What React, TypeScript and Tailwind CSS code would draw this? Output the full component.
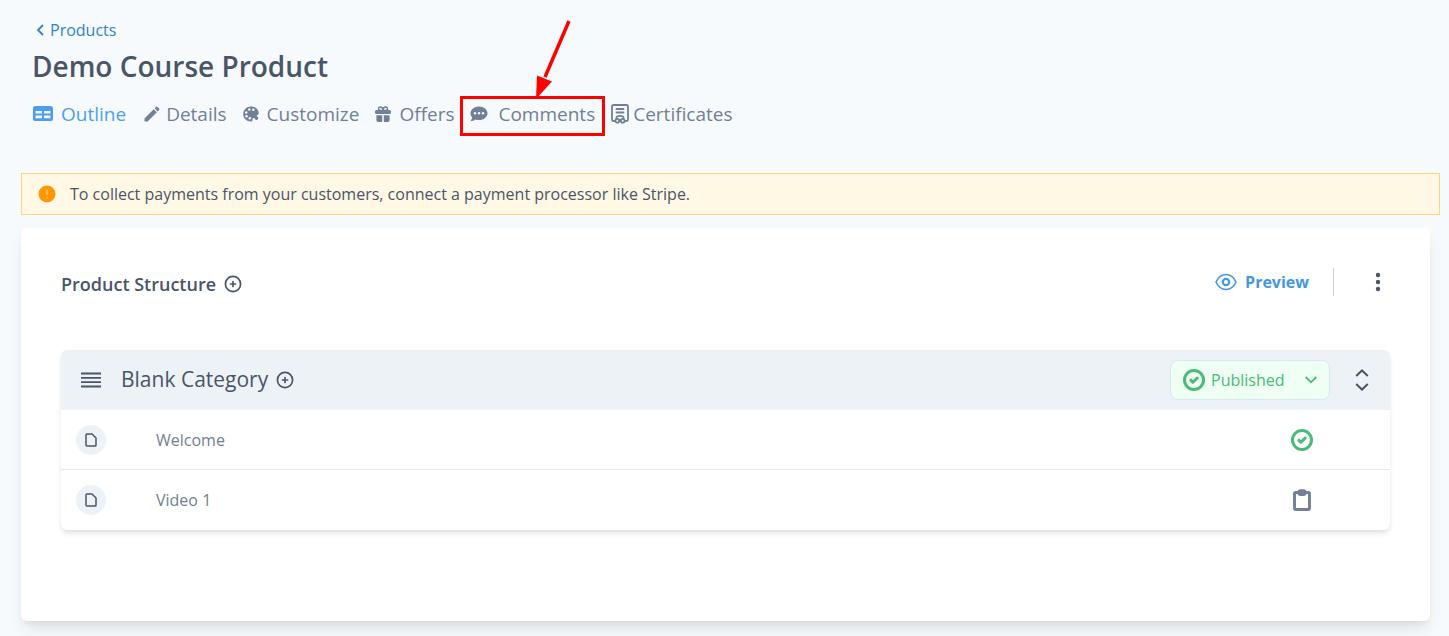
import { MdEdit } from "react-icons/md";

type IconProps = { className?: string };

function TableIcon({ className }: IconProps) {
    return (
        <svg className={className} viewBox="0 0 21 16" fill="none">
            <rect x="1" width="20" height="15" rx="2.6" fill="currentColor" />
            <path d="M3.600 5H10v2.600H3.600zM12 5h6.400v2.600H12zM3.600 9.600H10v2.600H3.600zM12 9.600h6.400v2.600H12z" fill="#f7fafc" />
        </svg>
    );
}

function PaletteIcon({ className }: IconProps) {
    return (
        <svg className={className} viewBox="0 0 16 16">
            <path d="M8 .5C3.600.5.200 3.800.200 8s3.400 7.500 7.800 7.500c1.300 0 1.700-.8 1.600-1.800-.1-1.200.5-1.800 1.500-1.500 1 .3 1.300 2 2.600 1.700 1.200-.3 1.900-1.500 1.500-2.500-.3-.8-1.600-.8-1.500-1.700.1-1 2.100-.7 2.100-2.500C15.800 3.500 12.500.5 8 .5Z" fill="currentColor" />
            <g fill="#f7fafc">
                <circle cx="6.300" cy="3.600" r="1.250" />
                <circle cx="10.300" cy="3.700" r="1.250" />
                <circle cx="3.200" cy="6.600" r="1.250" />
                <circle cx="3.500" cy="10.200" r="1.250" />
                <circle cx="6.800" cy="12.300" r="1.250" />
            </g>
        </svg>
    );
}

function GiftIcon({ className }: IconProps) {
    return (
        <svg className={className} viewBox="0 0 16 16" fill="currentColor">
            <path d="M1.400 9.300h5.800V16h-4a1.800 1.800 0 0 1-1.800-1.800ZM8.800 9.300h5.800v4.900a1.800 1.800 0 0 1-1.800 1.800h-4Z" />
            <path d="M1.500 4h13A1.500 1.500 0 0 1 16 5.500v1A1.500 1.500 0 0 1 14.500 8h-13A1.500 1.500 0 0 1 0 6.500v-1A1.500 1.500 0 0 1 1.500 4Z" />
            <path d="M8 4.400H5.200a1.700 1.700 0 1 1 0-3.400C6.900 1 8 2.700 8 4.400Zm0 0h2.800a1.700 1.700 0 1 0 0-3.400C9.100 1 8 2.700 8 4.400Z" fill="none" stroke="currentColor" strokeWidth="1.500" />
        </svg>
    );
}

function CommentIcon({ className }: IconProps) {
    return (
        <svg className={className} viewBox="0 0 18 16">
            <path d="M9 .5C4.300.5.500 3.500.500 7.300c0 1.600.7 3 1.700 4.200-.2 1.300-.8 2.400-1.700 3.500 1.900 0 3.500-.7 4.800-1.600 1.100.4 2.400.7 3.700.7 4.700 0 8.500-3 8.500-6.800S13.700.5 9 .5Z" fill="currentColor" />
            <g fill="#f7fafc">
                <circle cx="5" cy="7.300" r="1.200" />
                <circle cx="9" cy="7.300" r="1.200" />
                <circle cx="13" cy="7.300" r="1.200" />
            </g>
        </svg>
    );
}

function CertificateIcon({ className }: IconProps) {
    return (
        <svg className={className} viewBox="0 0 18 20" fill="none" stroke="currentColor" strokeWidth="1.8" strokeLinecap="round" strokeLinejoin="round">
            <path d="M3.500 17H2.500A1.500 1.500 0 0 1 1 15.500v-13A1.500 1.500 0 0 1 2.500 1h13A1.500 1.500 0 0 1 17 2.500v13a1.500 1.500 0 0 1-1.500 1.500h-1" />
            <path d="M5.500 5h7M5.500 8.500h7M5.500 14v-.500c0-2.200 7-2.200 7 0v.500" />
            <circle cx="6.300" cy="16.800" r="1.900" />
            <circle cx="11.700" cy="16.800" r="1.900" />
            <path d="M8.200 16h1.600" />
        </svg>
    );
}

function AddIcon({ className }: IconProps) {
    return (
        <svg className={className} viewBox="0 0 18 18" fill="none" stroke="currentColor" strokeWidth="1.7" strokeLinecap="round">
            <circle cx="9" cy="9" r="7.600" />
            <path d="M9 6.500v5M6.500 9h5" />
        </svg>
    );
}

function EyeIcon({ className }: IconProps) {
    return (
        <svg className={className} viewBox="0 0 22 18" fill="none" stroke="currentColor" strokeWidth="1.600">
            <path d="M1 9C3.300 4 6.800 1.500 11 1.500S18.700 4 21 9c-2.300 5-5.800 7.500-10 7.500S3.300 14 1 9Z" strokeLinejoin="round" />
            <circle cx="11" cy="9" r="3.200" strokeWidth="2.200" />
        </svg>
    );
}

function CheckIcon({ className }: IconProps) {
    return (
        <svg className={className} viewBox="0 0 22 22" fill="none" stroke="currentColor" strokeWidth="3" strokeLinecap="round" strokeLinejoin="round">
            <circle cx="11" cy="11" r="9.500" />
            <path d="m7.800 11.200 2.100 2.100L14.200 9" />
        </svg>
    );
}

function ClipboardIcon({ className }: IconProps) {
    return (
        <svg className={className} viewBox="0 0 18 22" fill="none" stroke="currentColor" strokeWidth="2.900" strokeLinejoin="round">
            <rect x="1.500" y="3.500" width="15" height="17" rx="1.300" />
            <rect x="5.900" y="1.600" width="6.200" height="4" rx="1.800" />
        </svg>
    );
}

function FileIcon({ className }: IconProps) {
    return (
        <svg className={className} viewBox="0 0 12 14" fill="none" stroke="currentColor" strokeWidth="1.500" strokeLinejoin="round">
            <path d="M2 1h5l4 4v7.200a.8.8 0 0 1-.8.8H2a1 1 0 0 1-1-1V2a1 1 0 0 1 1-1Z" />
        </svg>
    );
}

function Arrow() {
    return (
        <svg className="pointer-events-none absolute bottom-full left-15 h-20 w-12" viewBox="0 0 48 80">
            <path d="M46 2 22 58" stroke="#ff0000" strokeWidth="3.500" />
            <path d="M13 80 14 56.500 29 62.500Z" fill="#ff0000" />
        </svg>
    );
}

const lessons = [
    { title: "Welcome", published: true },
    { title: "Video 1", published: false }
];

export default function App() {
    return (
        <div className="min-h-screen bg-[#f7fafc] pb-3.5 font-['Open_Sans',sans-serif] text-[#4a5568]">
            <header className="px-8 pt-4">
                <a href="#products" className="flex items-center gap-1 pl-1 text-base leading-7 text-[#3182ce]">
                    <svg className="h-3 w-2.5" viewBox="0 0 10 12" fill="none" stroke="currentColor" strokeWidth="1.800">
                        <path d="M7 1 2 6l5 5" />
                    </svg>
                    Products
                </a>
                <h1 className="text-[28px] font-semibold leading-11">Demo Course Product</h1>
                <nav className="mt-1.5 flex h-10 items-center gap-4 text-[19px] text-[#718096]">
                    <a href="#outline" className="flex items-center gap-2 text-[#4c9ff0]">
                        <TableIcon className="h-4 w-[21px]" />
                        Outline
                    </a>
                    <a href="#details" className="flex items-center gap-1">
                        <MdEdit className="size-5" />
                        Details
                    </a>
                    <a href="#customize" className="flex items-center gap-2">
                        <PaletteIcon className="size-4" />
                        Customize
                    </a>
                    <a href="#offers" className="flex items-center gap-2">
                        <GiftIcon className="size-4" />
                        Offers
                    </a>
                    <a href="#comments" className="relative flex items-center gap-2.5">
                        <CommentIcon className="h-4 w-4.5" />
                        Comments
                        <span className="pointer-events-none absolute -inset-x-2.5 -bottom-2 -top-1 border-3 border-[#ff0000]">
                            <Arrow />
                        </span>
                    </a>
                    <a href="#certificates" className="flex items-center gap-1">
                        <CertificateIcon className="h-5 w-4.5" />
                        Certificates
                    </a>
                </nav>
            </header>

            <div className="ml-[21px] mr-[9px] mt-[39px] flex min-h-[42px] items-center gap-3.5 border border-[#fcd581] bg-[#fff8e5] px-4 text-base">
                <svg className="size-4.5 shrink-0" viewBox="0 0 18 18">
                    <circle cx="9" cy="9" r="8.500" fill="#ff9800" />
                    <path d="M9 4.500v5.500M9 12v1.500" stroke="#ffc46b" strokeWidth="1.500" />
                </svg>
                <p>To collect payments from your customers, connect a payment processor like Stripe.</p>
            </div>

            <main className="ml-[21px] mr-[19px] mt-[13px] rounded-md bg-white px-10 pb-[91px] pt-8 shadow-[0_10px_15px_-3px_rgba(0,0,0,0.1),0_4px_6px_-2px_rgba(0,0,0,0.05)]">
                <div className="flex h-11 items-center justify-between">
                    <div className="flex items-center gap-2 pt-1">
                        <h2 className="text-lg font-semibold">Product Structure</h2>
                        <button type="button" aria-label="Add to structure">
                            <AddIcon className="size-4.5" />
                        </button>
                    </div>
                    <div className="flex items-center">
                        <a href="#preview" className="flex items-center gap-2 text-base font-bold text-[#4299e1]">
                            <EyeIcon className="h-4.5 w-[22px]" />
                            Preview
                        </a>
                        <span className="ml-6 h-7 w-px bg-[#cbd5e0]" />
                        <button type="button" aria-label="More options" className="ml-8 flex size-6 items-center justify-center">
                            <svg className="h-5 w-1.5" viewBox="0 0 6 20" fill="currentColor">
                                <circle cx="3" cy="3" r="2.200" />
                                <circle cx="3" cy="10" r="2.200" />
                                <circle cx="3" cy="17" r="2.200" />
                            </svg>
                        </button>
                    </div>
                </div>

                <section className="mt-[46px] rounded-md shadow-[0_4px_6px_-1px_rgba(0,0,0,0.1),0_2px_4px_-1px_rgba(0,0,0,0.06)]">
                    <div className="flex h-15 items-center rounded-t-md bg-[#edf2f7] pl-5 pr-4">
                        <svg className="h-4 w-5" viewBox="0 0 20 16" stroke="currentColor" strokeWidth="1.800">
                            <path d="M0 1.500h20M0 5.800h20M0 10.200h20M0 14.500h20" />
                        </svg>
                        <h3 className="ml-5 text-[21px]">Blank Category</h3>
                        <button type="button" aria-label="Add to category" className="ml-2">
                            <AddIcon className="size-4.5" />
                        </button>
                        <button type="button" className="ml-auto flex h-10 w-40 items-center rounded-lg border border-[#d9e8ee] bg-[#f0fff4] px-3 text-base text-[#48bb78]">
                            <CheckIcon className="size-[22px]" />
                            <span className="ml-1.5">Published</span>
                            <svg className="ml-auto h-2 w-3" viewBox="0 0 12 8" fill="none" stroke="currentColor" strokeWidth="1.800">
                                <path d="m.7 1 5.300 5.300L11.300 1" />
                            </svg>
                        </button>
                        <button type="button" aria-label="Reorder" className="ml-5 flex w-6 justify-center">
                            <svg className="h-[22px] w-3.5" viewBox="0 0 14 22" fill="none" stroke="currentColor" strokeWidth="2">
                                <path d="m1.200 7 5.800-5.500L12.800 7M1.200 15 7 20.500l5.800-5.500" />
                            </svg>
                        </button>
                    </div>
                    <ul className="divide-y divide-[#e2e8f0] text-base text-[#718096]">
                        {lessons.map((lesson) => (
                            <li key={lesson.title} className="flex h-15 items-center pl-[15px] pr-[76px]">
                                <span className="flex size-[30px] items-center justify-center rounded-full bg-[#edf2f7] text-[#4a5568]">
                                    <FileIcon className="h-3.5 w-3" />
                                </span>
                                <span className="ml-[50px]">{lesson.title}</span>
                                <span className="ml-auto flex w-6 justify-center">
                                    {lesson.published ? (
                                        <CheckIcon className="size-[22px] text-[#48bb78]" />
                                    ) : (
                                        <ClipboardIcon className="h-[22px] w-[18px]" />
                                    )}
                                </span>
                            </li>
                        ))}
                    </ul>
                </section>
            </main>
        </div>
    );
}
